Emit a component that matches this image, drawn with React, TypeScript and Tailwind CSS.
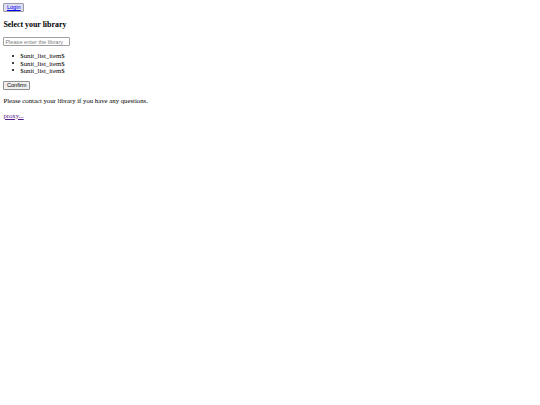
import React from "react";

function Item() {
  return (
    <li className="-ml-[8px] flex items-center">
      <span className="mr-[6px] h-[2px] w-[2px] rounded-full bg-black" />
      <span>$unit_list_item$</span>
    </li>
  );
}

export default function App() {
  return (
    <div className="min-h-[405px] bg-white p-[3.375px] text-[6.75px] leading-[1.15] text-black [font-family:'Liberation_Serif',serif]">
      <div className="flex">
        <button className="flex h-[9px] items-center rounded-[1px] border border-[#9a9aa8] bg-[#dedef2] px-[2.5px] text-[5.625px] leading-none [font-family:'Liberation_Sans',sans-serif]">
          <span className="text-[#0000ee] underline">Login</span>
        </button>
      </div>
      <h3 className="my-[7.9px] text-[7.9px] font-bold">Select your library</h3>
      <div className="flex">
        <input
          className="h-[9px] w-[67px] rounded-[1px] border border-[#a0a0a0] px-[1px] text-[5.625px] leading-none outline-none [font-family:'Liberation_Sans',sans-serif] placeholder:text-[#808080]"
          placeholder="Please enter the library"
        />
      </div>
      <ul className="mt-[6px] mb-[7.2px] list-none pl-[16.875px] leading-[7.3px]">
        <Item />
        <Item />
        <Item />
      </ul>
      <div className="flex">
        <button className="flex h-[9px] items-center rounded-[1px] border border-[#909090] bg-[#efefef] px-[2.5px] text-[5.625px] leading-none text-black [font-family:'Liberation_Sans',sans-serif]">
          Confirm
        </button>
      </div>
      <p className="my-[6.75px]">Please contact your library if you have any questions.</p>
      <p className="my-[6.75px]">
        <a href="#" className="text-[#551a8b] underline">proxy...</a>
      </p>
    </div>
  );
}
